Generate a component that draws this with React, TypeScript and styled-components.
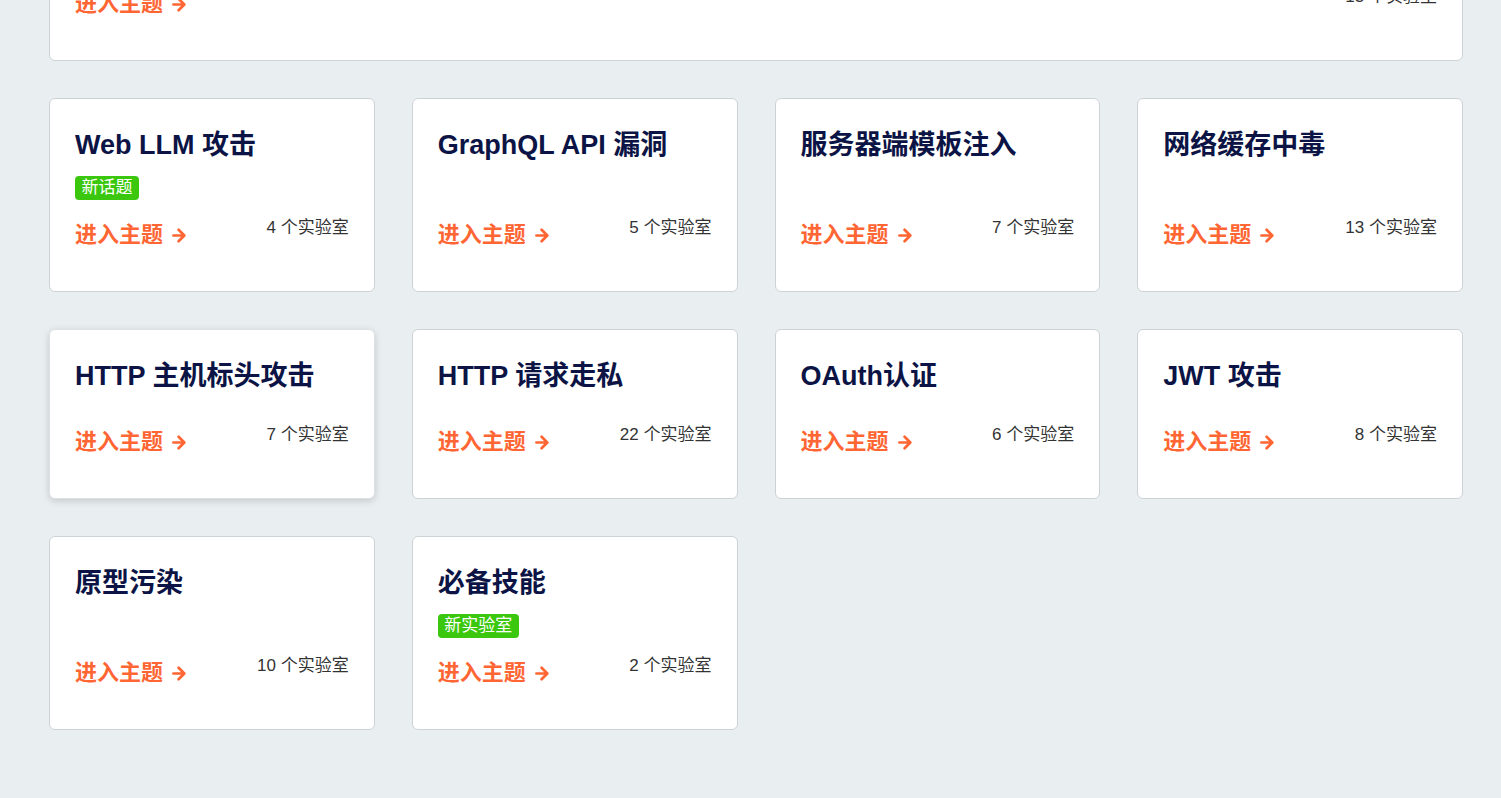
import React from "react";
import styled, { createGlobalStyle, css } from "styled-components";

const GlobalStyle = createGlobalStyle`
  html, body {
    margin: 0;
    padding: 0;
    background: #e9eef1;
    font-family: "Liberation Sans", Arial, "Noto Sans CJK SC", sans-serif;
    overflow: hidden;
  }
  * { box-sizing: border-box; }
`;

const Page = styled.main`
  width: 1414px;
  margin: -109px 0 0 49px;
  padding-bottom: 80px;
  display: flex;
  flex-direction: column;
  gap: 37px;
`;

const Grid = styled.section`
  display: grid;
  grid-template-columns: repeat(4, 1fr);
  gap: 37px;
`;

const Card = styled.article<{ $hovered?: boolean }>`
  background: #ffffff;
  border: 1px solid #cdd2d6;
  border-radius: 6px;
  padding: 30px 25px 44px 25px;
  display: flex;
  flex-direction: column;
  align-items: flex-start;
  ${(p) =>
    p.$hovered &&
    css`
      border-color: #dde1e4;
      box-shadow: 0 2px 7px rgba(0, 0, 0, 0.16);
    `}
`;

const Title = styled.h3`
  margin: 0 0 15px 0;
  font-size: 27px;
  line-height: 32px;
  font-weight: 700;
  color: #0c1445;
  font-family: "Liberation Sans", Arial, "Noto Sans CJK SC", sans-serif;
`;

const Badge = styled.span`
  display: inline-block;
  height: 24px;
  line-height: 24px;
  padding: 0 6.5px;
  border-radius: 4px;
  background: #3ac70d;
  color: #ffffff;
  font-size: 17px;
  font-family: "Liberation Sans", Arial, "Noto Sans CJK SC", sans-serif;
`;

const Footer = styled.div`
  margin-top: auto;
  padding-top: 15px;
  align-self: stretch;
  display: flex;
  justify-content: space-between;
  align-items: flex-start;
`;

const EnterLink = styled.a`
  margin-top: 8px;
  display: inline-flex;
  align-items: center;
  gap: 9px;
  height: 24px;
  font-size: 22px;
  line-height: 24px;
  font-weight: 700;
  color: #ff6633;
  text-decoration: none;
  cursor: pointer;
`;

const Count = styled.span`
  margin-top: 1px;
  font-size: 17px;
  line-height: 24px;
  color: #333333;
`;

const Arrow = () => (
  <svg width="14" height="15" viewBox="0 0 14 15" fill="none">
    <path
      d="M1.4 7.5h10.6M6.6 1.8l5.7 5.7-5.7 5.7"
      stroke="#ff6633"
      strokeWidth="2.7"
      strokeLinecap="round"
      strokeLinejoin="round"
    />
  </svg>
);

type Topic = {
  title: string;
  labs: number;
  badge?: string;
  hovered?: boolean;
};

const topics: Topic[] = [
  { title: "Web LLM 攻击", labs: 4, badge: "新话题" },
  { title: "GraphQL API 漏洞", labs: 5 },
  { title: "服务器端模板注入", labs: 7 },
  { title: "网络缓存中毒", labs: 13 },
  { title: "HTTP 主机标头攻击", labs: 7, hovered: true },
  { title: "HTTP 请求走私", labs: 22 },
  { title: "OAuth认证", labs: 6 },
  { title: "JWT 攻击", labs: 8 },
  { title: "原型污染", labs: 10 },
  { title: "必备技能", labs: 2, badge: "新实验室" },
];

const TopicCard = ({ t }: { t: Topic }) => (
  <Card $hovered={t.hovered}>
    <Title>{t.title}</Title>
    {t.badge && <Badge>{t.badge}</Badge>}
    <Footer>
      <EnterLink>
        进入主题 <Arrow />
      </EnterLink>
      <Count>{t.labs} 个实验室</Count>
    </Footer>
  </Card>
);

export default function App() {
  return (
    <>
      <GlobalStyle />
      <Page>
        <TopicCard t={{ title: "访问控制漏洞", labs: 13 }} />
        <Grid>
          {topics.map((t) => (
            <TopicCard key={t.title} t={t} />
          ))}
        </Grid>
      </Page>
    </>
  );
}
